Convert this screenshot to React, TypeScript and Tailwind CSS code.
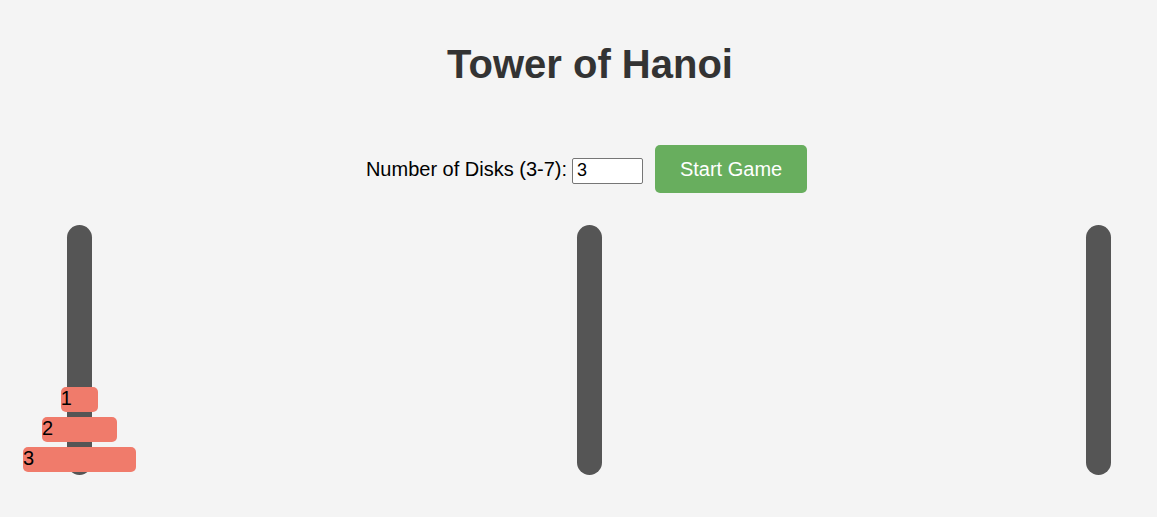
import React, { useState } from 'react';

const Tower: React.FC<{ disks: number[] }> = ({ disks }) => (
  <div className="relative flex h-[250px] w-[159px] justify-center">
    <div className="h-full w-[25px] rounded-full bg-[#555555]" />
    <div className="absolute bottom-[3px] left-0 right-0 flex flex-col items-center gap-[5px]">
      {disks.map(d => (
        <div
          key={d}
          className="h-[25px] rounded-[5px] bg-[#f07b6b] text-left text-[20px] leading-[23px] text-black"
          style={{ width: d * 37.6 }}
        >
          {d}
        </div>
      ))}
    </div>
  </div>
);

export default function App() {
  const [count, setCount] = useState('3');
  const n = Math.min(7, Math.max(3, Number(count) || 3));
  const first = Array.from({ length: n }, (_, i) => i + 1);

  return (
    <div className="h-[517px] w-full overflow-hidden bg-[#f4f4f4] font-['Liberation_Sans',Arial,sans-serif]">
      <div className="flex w-[1178px] flex-col items-center">
        <h1 className="mt-[41px] pl-[2px] text-[40px] font-bold leading-[46px] text-[#333333]">Tower of Hanoi</h1>

        <div className="mt-[58px] flex h-[48px] items-center pr-[5px]">
          <label className="text-[20px] leading-[23px] text-black">Number of Disks (3-7):</label>
          <input
            type="text"
            value={count}
            onChange={e => setCount(e.target.value)}
            className="ml-[5px] mt-[3px] h-[26px] w-[71px] rounded-[2px] border border-[#767676] bg-white px-[4px] text-[18px] leading-[21px] text-black"
          />
          <button className="ml-[12px] h-[48px] w-[152px] rounded-[5px] bg-[#68ae5e] text-[20px] leading-[23px] text-white">
            Start Game
          </button>
        </div>

        <div className="mt-[32px] flex w-full justify-between">
          <Tower disks={first} />
          <Tower disks={[]} />
          <Tower disks={[]} />
        </div>
      </div>
    </div>
  );
}
